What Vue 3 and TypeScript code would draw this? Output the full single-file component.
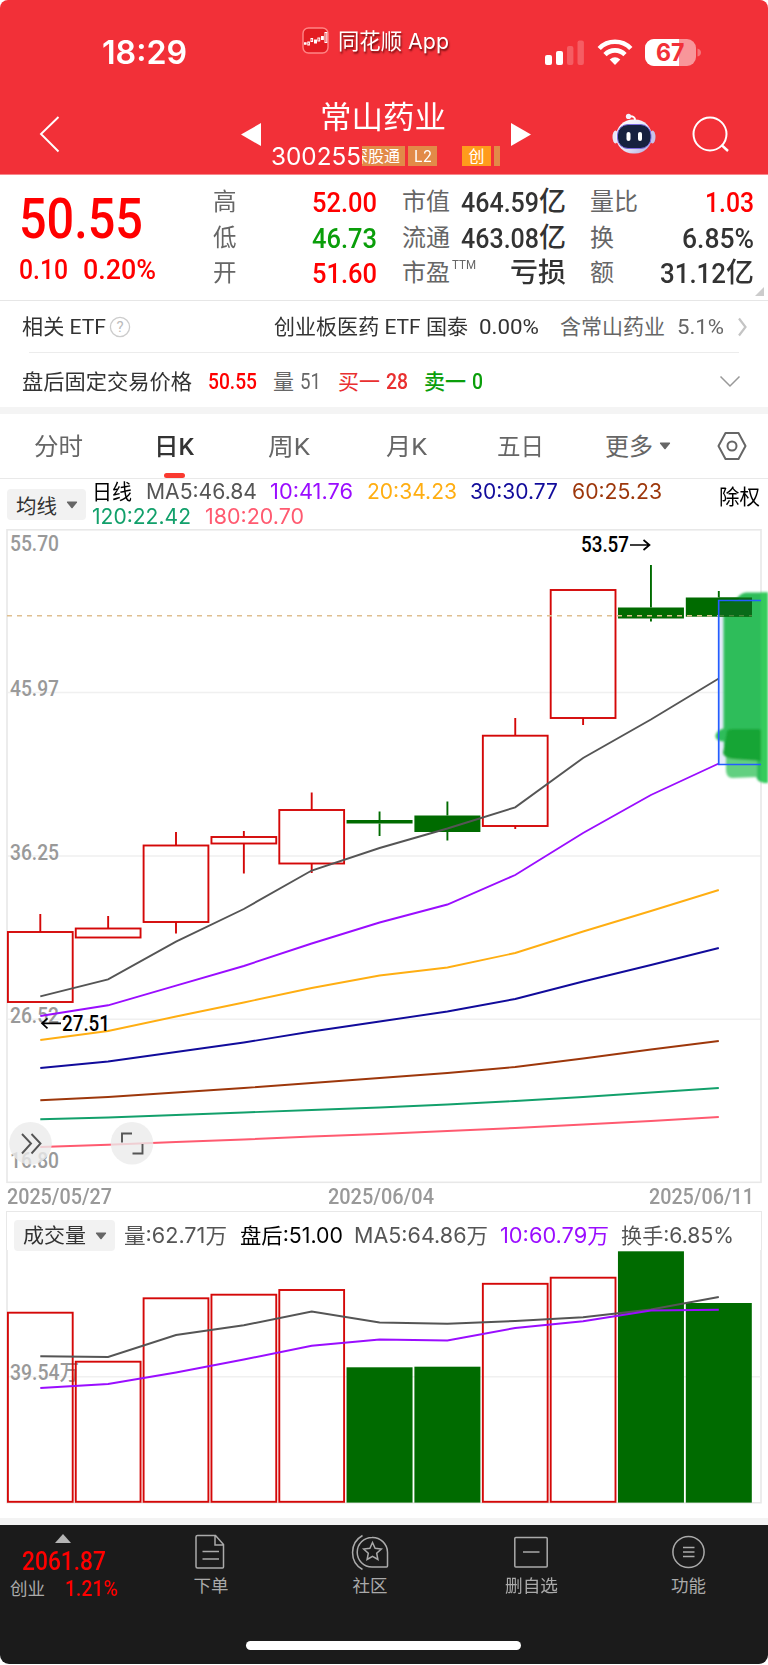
<script setup lang="ts">
import type { Directive } from 'vue'

// Scales a label horizontally so that it occupies the given width in the flow.
const vFit: Directive<HTMLElement, number> = {
  mounted(el, binding) {
    const natural = el.getBoundingClientRect().width
    el.style.transform = `scaleX(${binding.value / natural})`
    el.style.marginRight = `${binding.value - natural}px`
  },
}

interface Stat { text: string; w: number; tone?: string; sup?: string; cjk?: string; cjkW?: number }

const prices: { label: string; value: string; tone: string }[] = [
  { label: '高', value: '52.00', tone: 'up' },
  { label: '低', value: '46.73', tone: 'down' },
  { label: '开', value: '51.60', tone: 'up' },
]
const caps: { label: string; stat: Stat }[] = [
  { label: '市值', stat: { text: '464.59', w: 78, cjk: '亿', cjkW: 27 } },
  { label: '流通', stat: { text: '463.08', w: 78, cjk: '亿', cjkW: 27 } },
  { label: '市盈', stat: { text: '', w: 0, cjk: '亏损', cjkW: 56, sup: 'TTM' } },
]
const turns: { label: string; w: number; stat: Stat }[] = [
  { label: '量比', w: 48, stat: { text: '1.03', w: 49, tone: 'up' } },
  { label: '换', w: 24, stat: { text: '6.85%', w: 72 } },
  { label: '额', w: 24, stat: { text: '31.12', w: 66, cjk: '亿', cjkW: 28 } },
]

const tabs = [
  { text: '分时', w: 49 },
  { text: '日K', w: 40, active: true },
  { text: '周K', w: 42 },
  { text: '月K', w: 41 },
  { text: '五日', w: 47 },
]

const averages = [
  { text: '日线', w: 40, color: '#000' },
  { text: 'MA5:46.84', w: 111, color: '#555' },
  { text: '10:41.76', w: 83, color: '#9a0dff' },
  { text: '20:34.23', w: 90, color: '#ffae12' },
  { text: '30:30.77', w: 88, color: '#110b9b' },
  { text: '60:25.23', w: 90, color: '#9d370b' },
]
const longAverages = [
  { text: '120:22.42', w: 99, color: '#12a06b' },
  { text: '180:20.70', w: 99, color: '#ff5a70' },
]
const volumeLegend = [
  { text: '量:62.71万', w: 103, color: '#555' },
  { text: '盘后:51.00', w: 103, color: '#000' },
  { text: 'MA5:64.86万', w: 134, color: '#555' },
  { text: '10:60.79万', w: 109, color: '#9a0dff' },
  { text: '换手:6.85%', w: 113, color: '#555' },
]

// Horizontal geometry shared by both charts
const STEP = 67.85
const FIRST = 40.3
const cx = (i: number) => FIRST + i * STEP
const line = (ys: number[]) => ys.map((y, i) => `${cx(i).toFixed(1)},${y}`).join(' ')

// high, body top, body bottom, low, rising
const candles: { h: number; t: number; b: number; l: number; up: boolean }[] = [
  { h: 914, t: 932, b: 1002, l: 1002, up: true },
  { h: 916, t: 928.5, b: 937.5, l: 937.5, up: true },
  { h: 832, t: 845.5, b: 922, l: 933.5, up: true },
  { h: 831, t: 837, b: 843.5, l: 873.5, up: true },
  { h: 792.5, t: 810, b: 863.5, l: 873, up: true },
  { h: 811.5, t: 820, b: 823.5, l: 836, up: false },
  { h: 801.5, t: 815.5, b: 832, l: 840.5, up: false },
  { h: 718, t: 735.7, b: 826, l: 829, up: true },
  { h: 590, t: 590, b: 718, l: 725, up: true },
  { h: 565, t: 607.5, b: 618.5, l: 621.5, up: false },
  { h: 591, t: 597.5, b: 616.7, l: 616.7, up: false },
]

const priceLines = [
  { color: '#555', ys: [996.3, 979.3, 941.7, 909, 870.5, 848, 828.5, 807.3, 758, 719.5, 678.5] },
  { color: '#9a0dff', ys: [1016, 1005.3, 985.7, 966, 943.5, 922.5, 904.5, 875, 833, 795, 763.5] },
  { color: '#ffae12', ys: [1040, 1031, 1016.5, 1002.5, 988, 975.5, 967.5, 953, 931.5, 911, 890] },
  { color: '#110b9b', ys: [1068, 1061.5, 1052, 1042.5, 1031.5, 1021.5, 1011.5, 999, 981.5, 965, 948] },
  { color: '#9d370b', ys: [1100.3, 1097, 1092.5, 1088, 1083, 1078, 1073, 1067, 1058.5, 1049.5, 1041] },
  { color: '#12a06b', ys: [1119.3, 1117.5, 1115, 1112.5, 1110, 1107.5, 1104.5, 1101, 1097, 1092.5, 1088] },
  { color: '#ff5a70', ys: [1147, 1144.7, 1142, 1139.5, 1136.5, 1134, 1131, 1128, 1124.5, 1121, 1117] },
]

const volumes = [
  { t: 1312.7, up: true }, { t: 1361.7, up: true }, { t: 1298.3, up: true }, { t: 1294.7, up: true },
  { t: 1290, up: true }, { t: 1367.3, up: false }, { t: 1366.7, up: false }, { t: 1283.8, up: true },
  { t: 1277.7, up: true }, { t: 1251.3, up: false }, { t: 1303, up: false },
]
const volumeLines = [
  { color: '#555', ys: [1356.3, 1357, 1335, 1325.3, 1311.5, 1322.5, 1323.7, 1321, 1317.3, 1309.5, 1297] },
  { color: '#9a0dff', ys: [1388, 1384, 1372.5, 1359.5, 1345.7, 1339.5, 1340.5, 1328, 1321.3, 1310.5, 1309.7] },
]
const axis = [
  { v: '55.70', y: 550.5 }, { v: '45.97', y: 696 }, { v: '36.25', y: 859.5 },
  { v: '26.52', y: 1022.5 }, { v: '16.80', y: 1168 },
]
</script>

<template>
  <main class="screen">
    <header class="top">
      <div class="status">
        <span class="clock"><b v-fit="85">18:29</b></span>
        <span class="app-tag">
          <svg width="28" height="28" viewBox="0 0 28 28">
            <rect x="1" y="1" width="25" height="25" rx="5.5" fill="#e31c22" stroke="#ff8585" stroke-width="1.4" />
            <g stroke="#fff" stroke-width="1" fill="none">
              <rect x="2.5" y="15.8" width="1.6" height="1.4" fill="#fff" />
              <rect x="5.8" y="15" width="1.6" height="3" /><rect x="9" y="11.5" width="1.6" height="3" />
              <rect x="12.5" y="13" width="2" height="3" fill="#fff" /><rect x="15.9" y="11" width="1.8" height="3" />
              <rect x="19.5" y="9.5" width="1.8" height="3" fill="#fff" /><rect x="23" y="5.5" width="1.8" height="10" />
            </g>
          </svg>
          <b v-fit="111">同花顺 App</b>
        </span>
        <span class="device">
          <svg width="162" height="30" viewBox="0 0 162 30">
            <g fill="#fff">
              <rect x="1" y="18" width="7" height="10" rx="2" />
              <rect x="12" y="14" width="7" height="14" rx="2" />
              <rect x="23" y="9" width="6.4" height="19" rx="2" opacity=".22" />
              <rect x="33.5" y="3.5" width="6.4" height="24.5" rx="2" opacity=".22" />
            </g>
            <g fill="none" stroke="#fff" stroke-width="4.6">
              <path d="M55.2 11.5a22 22 0 0 1 31.6 0" />
              <path d="M61 17.6a14 14 0 0 1 20 0" />
            </g>
            <path d="M65.7 22.4q5.3-4.5 10.6 0L71 28z" fill="#fff" />
            <rect x="101" y="2" width="51" height="27" rx="9" fill="#f8969a" />
            <path d="M110 2h25v27h-25a9 9 0 0 1-9-9v-9a9 9 0 0 1 9-9z" fill="#fff" />
            <path d="M153.5 11.5q3.5 1 3.5 4t-3.5 4z" fill="#f57479" />
            <text x="112" y="24.4" textLength="28.5" lengthAdjust="spacingAndGlyphs" class="battery">67</text>
          </svg>
        </span>
      </div>
      <div class="nav">
        <svg class="back" width="24" height="40" viewBox="0 0 24 40"><path d="M20.5 3 3 20l17.500 17.500" fill="none" stroke="#fff" stroke-width="1.9" /></svg>
        <svg class="prev" width="20" height="23" viewBox="0 0 20 23"><path d="M20 0v23L0 11.500z" fill="#fff" /></svg>
        <div class="title">
          <div class="name"><span v-fit="126">常山药业</span></div>
          <div class="code">
            <span v-fit="90">300255</span>
            <div class="tags">
              <i class="tag t1"><span>深股通</span></i>
              <i class="tag t2"><span v-fit="18">L2</span></i>
              <i class="tag t3">创</i>
              <i class="tag t4"></i>
            </div>
          </div>
        </div>
        <svg class="next" width="20" height="23" viewBox="0 0 20 23"><path d="M0 0v23l20-11.500z" fill="#fff" /></svg>
        <svg class="bot" width="44" height="41" viewBox="0 0 44 41">
          <defs>
            <linearGradient id="shell" x1="0" y1="0" x2="1" y2="1">
              <stop offset="0" stop-color="#fff" /><stop offset=".6" stop-color="#e3e2f6" /><stop offset="1" stop-color="#aaa4dc" />
            </linearGradient>
          </defs>
          <path d="M16.500 3.500q7-1 6.500 4" fill="none" stroke="#fff" stroke-width="2" />
          <circle cx="16.500" cy="3.400" r="2.600" fill="#f4f2ff" />
          <ellipse cx="3.500" cy="24" rx="3" ry="6.500" fill="#e8e5f7" /><ellipse cx="40.500" cy="24" rx="3" ry="6.500" fill="#c8c2ea" />
          <rect x="4" y="6.500" width="36" height="34" rx="17" fill="url(#shell)" />
          <rect x="5.500" y="11.500" width="33.500" height="24" rx="10.500" fill="#17213f" stroke="#7d6be0" stroke-width="1" />
          <rect x="14.500" y="19" width="4" height="9" rx="2" fill="#fff" /><rect x="26" y="19" width="4" height="9" rx="2" fill="#fff" />
        </svg>
        <svg class="search" width="38" height="38" viewBox="0 0 38 38" fill="none" stroke="#fff" stroke-width="2"><circle cx="18" cy="18" r="16.500" /><path d="m29.500 29 6.500 6" stroke-width="2.400" /></svg>
      </div>
    </header>

    <section class="quote">
      <div class="last">
        <div class="big"><span v-fit="124">50.55</span></div>
        <div class="chg"><span v-fit="49">0.10</span><span v-fit="73">0.20%</span></div>
      </div>
      <dl class="col c1">
        <div v-for="p in prices" :key="p.label">
          <dt><span v-fit="23.5">{{ p.label }}</span></dt>
          <dd :class="p.tone"><span v-fit="65">{{ p.value }}</span></dd>
        </div>
      </dl>
      <dl class="col c2">
        <div v-for="c in caps" :key="c.label">
          <dt><span v-fit="48">{{ c.label }}</span><sup v-if="c.stat.sup"><span v-fit="24">{{ c.stat.sup }}</span></sup></dt>
          <dd><span v-if="c.stat.text" v-fit="c.stat.w">{{ c.stat.text }}</span><em v-fit="c.stat.cjkW || 0">{{ c.stat.cjk }}</em></dd>
        </div>
      </dl>
      <dl class="col c3">
        <div v-for="t in turns" :key="t.label">
          <dt><span v-fit="t.w">{{ t.label }}</span></dt>
          <dd :class="t.stat.tone"><span v-fit="t.stat.w">{{ t.stat.text }}</span><em v-if="t.stat.cjk" v-fit="t.stat.cjkW || 0">{{ t.stat.cjk }}</em></dd>
        </div>
      </dl>
      <i class="corner"></i>
    </section>

    <section class="etf">
      <span v-fit="84">相关 ETF</span>
      <svg width="22" height="22" viewBox="0 0 22 22"><circle cx="11" cy="11" r="9.600" fill="none" stroke="#ccc" stroke-width="1.300" /><text x="11" y="16.300" text-anchor="middle" class="q">?</text></svg>
      <span v-fit="194">创业板医药 ETF 国泰</span>
      <span v-fit="60">0.00%</span>
      <span v-fit="105" class="dim">含常山药业</span>
      <span v-fit="47" class="dim">5.1%</span>
      <svg width="12" height="22" viewBox="0 0 12 22"><path d="m2 2.500 6.500 8.500L2 19.500" fill="none" stroke="#c4c4c4" stroke-width="2.200" /></svg>
    </section>

    <section class="after">
      <span v-fit="170">盘后固定交易价格</span>
      <b v-fit="49" class="up">50.55</b>
      <span v-fit="21" class="dim">量</span>
      <b v-fit="21" class="dim light">51</b>
      <span v-fit="42" class="buy">买一</span>
      <b v-fit="22" class="buy">28</b>
      <span v-fit="42" class="down strong">卖一</span>
      <b v-fit="11" class="down">0</b>
      <svg width="22" height="14" viewBox="0 0 22 14"><path d="m1.500 1.500 9.500 9.500 9.500-9.500" fill="none" stroke="#999" stroke-width="1.500" /></svg>
    </section>

    <nav class="tabs">
      <div v-for="t in tabs" :key="t.text" :class="{ active: t.active }"><span v-fit="t.w">{{ t.text }}</span></div>
      <div><span v-fit="48">更多</span></div>
      <svg class="caret" width="12" height="8" viewBox="0 0 12 8"><path d="M1.500.500h9a.700.700 0 0 1 .500 1L6.600 7a.800.800 0 0 1-1.200 0L1 1.500a.700.700 0 0 1 .500-1z" fill="#666" /></svg>
      <svg width="32" height="30" viewBox="0 0 32 30" fill="none" stroke="#666" stroke-width="2"><path d="M9.500 2h13l7 13-7 13h-13l-7-13z" stroke-linejoin="round" /><circle cx="16" cy="15" r="4.500" /></svg>
    </nav>

    <section class="legend">
      <div class="picker"><span v-fit="41">均线</span><svg width="12" height="8" viewBox="0 0 12 8"><path d="M1.500.500h9a.700.700 0 0 1 .500 1L6.600 7a.800.800 0 0 1-1.200 0L1 1.500a.700.700 0 0 1 .500-1z" fill="#666" /></svg></div>
      <div class="avgs">
        <div><span v-for="a in averages" :key="a.text" v-fit="a.w" :style="{ color: a.color }">{{ a.text }}</span></div>
        <div><span v-for="a in longAverages" :key="a.text" v-fit="a.w" :style="{ color: a.color }">{{ a.text }}</span></div>
      </div>
      <div class="rights"><span v-fit="41">除权</span></div>
    </section>

    <svg class="kline" width="768" height="656" viewBox="0 528 768 656">
      <defs>
        <filter id="soft" x="-20%" y="-20%" width="140%" height="140%"><feGaussianBlur stdDeviation="1.200" /></filter>
      </defs>
      <g fill="none" stroke="#e8e8e8">
        <path d="M8 692.500H761M8 856H761M8 1019.300H761" stroke="#f0f0f0" stroke-width="1.500" />
        <rect x="7" y="529.800" width="754" height="652.500" stroke-width="1.600" />
      </g>
      <g class="axis"><text v-for="a in axis" :key="a.v" x="10" :y="a.y" textLength="49" lengthAdjust="spacingAndGlyphs">{{ a.v }}</text></g>
      <g v-for="(c, i) in candles" :key="i" :stroke="c.up ? '#d40808' : '#006b00'" stroke-width="1.9">
        <path v-if="c.h < c.t" :d="`M${cx(i)} ${c.h}V${c.t}`" />
        <path v-if="c.l > c.b" :d="`M${cx(i)} ${c.b}V${c.l}`" />
        <rect v-if="c.up" :x="cx(i) - 32.4" :y="c.t" width="64.8" :height="c.b - c.t" fill="none" />
        <rect v-else :x="cx(i) - 33" :y="c.t" width="66" :height="c.b - c.t" fill="#006b00" stroke="none" />
      </g>
      <path d="M7 615.700H761" stroke="#dfbf90" stroke-width="1.500" stroke-dasharray="5 5" />
      <polyline v-for="l in priceLines" :key="l.color" :points="line(l.ys)" fill="none" :stroke="l.color" stroke-width="1.9" />
      <rect x="718.700" y="600.500" width="42.500" height="164" fill="#dfe4fa" fill-opacity=".75" />
      <g filter="url(#soft)">
        <path d="M738 597q3-4 8-4.500h22v190h-3q-9 0-9-8l-25 2q-5-2-4-8l2-10q-6-3-5-8l0-9q-9 0-8.500-6 1-5 8-7V616q-1-3 5-5 6-12 9.500-14z" fill="#2ebd5a" />
        <path d="M726 756l31 3v18l-25 1q-6-1-6-8z" fill="#62d080" />
        <path d="M727 731q1-2 6-2h26q2 0 2 3v29l-28-2q-9-1-10-6z" fill="#18a534" />
        <path d="M761 592.500h7v190.500h-3q-4 0-4-3z" fill="#35cb5b" />
      </g>
      <path d="M719 597.500h33v19.200h-33z" fill="#006b00" /><path d="M740 598h12v18.500h-32v-14q14 1 20-4.500z" fill="#086a18" />
      <path d="M719 615.700h33" stroke="#dfbf90" stroke-width="1.100" stroke-dasharray="5 5" opacity=".4" />
      <path d="M761 600.500h-42.300v164H761" fill="none" stroke="#245dff" stroke-width="1.700" />
      <g class="mark">
        <text x="581" y="552" textLength="48" lengthAdjust="spacingAndGlyphs">53.57</text>
        <text x="62" y="1030.700" textLength="48" lengthAdjust="spacingAndGlyphs">27.51</text>
        <path d="M630 545h19.500M643.500 540l6 5-6 5M61 1023.300H42M47.500 1018.300l-5.500 5 5.500 5" fill="none" stroke="#000" stroke-width="1.700" />
      </g>
      <g fill="#ebebeb" fill-opacity=".8"><circle cx="30.500" cy="1143.300" r="21.300" /><circle cx="132" cy="1143.300" r="21.300" /></g>
      <path d="m22 1134 9 9.500-9 10M31.500 1134l9 9.500-9 10M122 1142.500v-9h10M132.500 1153.500h10v-9.500" fill="none" stroke="#555" stroke-width="1.900" />
    </svg>

    <div class="dates"><span v-fit="105">2025/05/27</span><span v-fit="106">2025/06/04</span><span v-fit="105">2025/06/11</span></div>

    <section class="volume">
      <div class="vhead">
        <div class="picker"><span v-fit="63">成交量</span><svg width="12" height="8" viewBox="0 0 12 8"><path d="M1.500.500h9a.700.700 0 0 1 .500 1L6.600 7a.800.800 0 0 1-1.200 0L1 1.500a.700.700 0 0 1 .500-1z" fill="#666" /></svg></div>
        <span v-for="v in volumeLegend" :key="v.text" v-fit="v.w" :style="{ color: v.color }">{{ v.text }}</span>
      </div>
      <svg width="768" height="254" viewBox="0 1250 768 254">
        <path d="M7 1250V1502.700H761V1250" fill="none" stroke="#e8e8e8" stroke-width="1.600" />
        <path d="M8 1376.700H761" stroke="#f0f0f0" stroke-width="1.500" />
        <g class="axis"><text x="10" y="1379.500" textLength="69" lengthAdjust="spacingAndGlyphs">39.54万</text></g>
        <template v-for="(v, i) in volumes" :key="i">
          <rect v-if="v.up" :x="cx(i) - 32.4" :y="v.t" width="64.8" :height="1501.8 - v.t" fill="none" stroke="#d40808" stroke-width="1.9" />
          <rect v-else :x="cx(i) - 33" :y="v.t" width="66" :height="1502.6 - v.t" fill="#006b00" />
        </template>
        <polyline v-for="l in volumeLines" :key="l.color" :points="line(l.ys)" fill="none" :stroke="l.color" stroke-width="1.9" />
      </svg>
    </section>

    <footer class="bar">
      <div class="items">
        <div class="index">
          <svg width="16" height="9" viewBox="0 0 16 9"><path d="M8 0l8 9H0z" fill="#b4b4b4" /></svg>
          <b v-fit="84">2061.87</b>
          <div><span v-fit="35">创业</span><b v-fit="53">1.21%</b></div>
        </div>
        <div class="item">
          <svg width="36" height="36" viewBox="0 0 36 36"><path d="M4.500 1.500h18l8 9V33q0 1-1 1h-25q-1.500 0-1.500-1.500V3q0-1.500 1.500-1.500zM22 2v9h8.500M9.500 17.500H26M9.500 25H26" /></svg>
          <span v-fit="35">下单</span>
        </div>
        <div class="item">
          <svg width="38" height="36" viewBox="0 0 38 36"><path d="M21 3.500a14.800 14.800 0 0 0 0 29.600h14.500q1 0 1-1V18.300A15 15 0 0 0 21 3.500zM11.500 1.500a19.500 19.500 0 0 0 0 34" /><path d="m21.500 8.500 2.600 5.800 6.200.700-4.600 4.200 1.200 6.300-5.400-3.200-5.400 3.200 1.200-6.300-4.600-4.200 6.200-.700z" /></svg>
          <span v-fit="35">社区</span>
        </div>
        <div class="item">
          <svg width="36" height="36" viewBox="0 0 36 36"><rect x="1.800" y="3.500" width="32.400" height="29.500" rx="1" /><path d="M10 18h16.500" /></svg>
          <span v-fit="53">删自选</span>
        </div>
        <div class="item">
          <svg width="36" height="36" viewBox="0 0 36 36"><circle cx="17.500" cy="18" r="15.600" /><path d="M12 13.500h11.500M12 18h11.500M12 22.500h11.500" /></svg>
          <span v-fit="35">功能</span>
        </div>
      </div>
      <div class="home"></div>
    </footer>
  </main>
</template>

<style>
body { background: #fff; }
</style>

<style scoped>
* { box-sizing: border-box; }
.screen {
  width: 768px;
  height: 1665px;
  overflow: hidden;
  display: flex;
  flex-direction: column;
  background: #fff;
  font-family: Inter, "Noto Sans CJK SC", sans-serif;
  color: #333;
}
span, b, em { display: inline-block; flex: none; white-space: nowrap; transform-origin: left center; font-style: normal; }
svg { display: block; flex: none; }
.up { color: #f00; }
.down { color: #0a9e0a; }
.dim { color: #666; }
.buy { color: #e93030; }

.top { height: 175px; flex: none; background: #f23038; border-radius: 8px 8px 0 0; color: #fff; border-bottom: 1px solid #f8868b; }
.status { height: 100px; display: grid; grid-template-columns: 302px 242px 1fr; align-items: start; }
.clock { padding: 33px 0 0 102px; font-size: 32px; line-height: 40px; font-weight: 600; }
.clock b { font-weight: 600; }
.app-tag { display: flex; align-items: center; gap: 8px; padding-top: 27px; }
.app-tag b { font-weight: 400; font-size: 22px; line-height: 28px; text-shadow: 1px 2px 2px rgba(70, 0, 0, .75); }
.device { padding-top: 37px; }
.battery { font: 700 24px Inter, sans-serif; fill: #f23038; }
.nav { display: grid; height: 73px; grid-template-columns: 38px 203px 30px 240px 101px 81px 1fr; align-items: start; }
.back { grid-column: 2; grid-row: 1; margin-top: 14px; }
.prev { margin-top: 23px; grid-column: 2; grid-row: 1; justify-self: end; margin-right: -20px; }
.title { grid-column: 4; grid-row: 1; }
.name { height: 44px; padding-left: 49px; font-size: 31px; line-height: 34px; font-weight: 400; }
.code { display: flex; align-items: center; height: 22px; font-size: 24.500px; line-height: 22px; gap: 1px; margin-top: 1px; }
.tags { display: flex; }
.tag { height: 20px; font-style: normal; background: #e28a48; font-size: 16px; line-height: 20px; overflow: hidden; display: flex; justify-content: flex-end; }
.t1 { width: 43px; margin-right: 3px; padding-right: 5px; }
.t2 { width: 29px; margin-right: 25px; padding-right: 5px; }
.t3 { width: 29px; margin-right: 3px; background: #ff9b1c; justify-content: center; }
.t4 { width: 6px; }
.next { grid-column: 5; grid-row: 1; margin-top: 23px; }
.bot { grid-column: 6; grid-row: 1; margin-top: 13px; }
.search { grid-column: 7; grid-row: 1; margin: 16px 0 0 -1px; }

.quote { position: relative; height: 126px; flex: none; display: grid; grid-template-columns: 213px 164px 25px 164px 24px 164px; border-bottom: 1.500px solid #e6e6e6; font-family: Roboto, "Noto Sans CJK SC", sans-serif; }
.last { color: #f00; padding-left: 19px; font-weight: 500; }
.big { font-size: 55px; line-height: 60px; padding-top: 14px; }
.chg { display: flex; gap: 15px; font-size: 28px; line-height: 36px; margin-top: 3px; }
.col { margin: 0; padding-top: 10px; }
.col > div { height: 35.500px; display: flex; justify-content: space-between; align-items: center; line-height: 35.500px; }
.c2 { grid-column: 4; }
.c3 { grid-column: 6; }
dt { font-size: 24px; color: #666; font-weight: 400; display: flex; }
dd { margin: 0; font-size: 28px; font-weight: 500; display: flex; }
dd em { font-size: 27px; }
sup { font-size: 12px; line-height: 12px; margin: 3px 0 0 2px; vertical-align: top; }
.corner { position: absolute; right: 4px; bottom: 4px; border: solid transparent; border-width: 0 0 9px 9px; border-bottom-color: #ccc; }

.etf, .after { height: 52px; flex: none; display: grid; justify-items: start; align-items: center; font-size: 21px; line-height: 30px; position: relative; font-family: Roboto, "Noto Sans CJK SC", sans-serif; }
.etf { grid-template-columns: 87px 165px 205px 81px 117px 60px 1fr; padding-left: 22px; }
.etf::after { content: ""; position: absolute; left: 29px; right: 29px; bottom: 0; height: 1.500px; background: #ececec; }
.q { font: 15px Roboto, sans-serif; fill: #bbb; }
.after { height: 54px; padding: 4px 0 0 22px; grid-template-columns: 186px 65px 27px 38px 48px 38px 48px 247px 1fr; }
.after b { font-weight: 500; font-size: 21.500px; }
.after .light { font-weight: 400; }
.strong { font-weight: 500; }

.tabs { flex: none; height: 72px; border-top: 7px solid #f4f4f4; border-bottom: 1px solid #e9e9e9; display: grid; grid-template-columns: 120px 114px 118px 111px 108px 54px 57px 1fr; padding-left: 34px; align-items: center; font-size: 24px; color: #666; font-weight: 400; font-family: Roboto, "Noto Sans CJK SC", sans-serif; }
.tabs > div { height: 64px; line-height: 67px; position: relative; }
.tabs .active { color: #333; font-weight: 500; }
.tabs .active::after { content: ""; position: absolute; left: 10px; bottom: 0; width: 21px; height: 5px; border-radius: 2.500px; background: #fa3a30; }
.tabs > svg { margin-top: 0; }

.legend { flex: none; height: 49px; display: grid; grid-template-columns: 85px 627px 1fr; padding-left: 7px; font-size: 21px; }
.picker { display: flex; align-items: center; justify-content: space-between; background: #f2f2f2; border-radius: 4px; width: 79px; height: 31px; margin-top: 10px; padding: 0 8px 0 9px; font-size: 20.500px; }
.avgs > div { display: flex; gap: 13.600px; height: 25px; line-height: 26px; }
.rights { line-height: 35px; color: #000; }
.axis { font: 500 21.500px Roboto, "Noto Sans CJK SC", sans-serif; fill: #999; }
.mark { font: 500 21.500px Roboto, sans-serif; }
.dates { flex: none; height: 27px; display: flex; justify-content: space-between; padding: 0 14px 0 7px; font: 500 21.500px/26px Roboto, sans-serif; color: #999; }
.volume { flex: none; }
.vhead { height: 39px; margin: 0 6px; border: solid #e8e8e8; border-width: 1.600px 1.600px 0; display: grid; grid-template-columns: 110px 116px 114px 146px 121px 1fr; padding-left: 7px; align-items: center; justify-items: start; font-size: 21px; line-height: 30px; padding-top: 8px; }
.vhead .picker { width: 101px; margin: 0; }

.bar { flex: none; margin-top: 14px; border-top: 7px solid #f3f3f3; height: 146px; background: #1b1b1b; background-clip: padding-box; border-radius: 0 0 9px 9px; color: #aaa; }
.items { height: 116px; display: grid; grid-template-columns: 135px 152px 166px 156px 1fr; }
.index { padding: 9px 0 0 10px; color: #f00; font-family: Roboto, "Noto Sans CJK SC", sans-serif; }
.index > svg { margin-left: 44.500px; }
.index > b { margin-left: 12px; font-size: 25px; line-height: 36px; font-weight: 500; margin-top: 1px; }
.index > div { display: flex; gap: 20px; align-items: center; line-height: 26px; margin-top: -4px; }
.index > div span { color: #aaa; font-size: 17.500px; }
.index > div b { font-size: 22px; font-weight: 500; }
.item { display: flex; flex-direction: column; align-items: center; padding-top: 9px; font-size: 17.500px; line-height: 32px; }
.item svg { fill: none; stroke: #aaa; stroke-width: 1.500; }
.home { width: 275px; height: 9px; border-radius: 5px; background: #fff; margin: 0 0 0 246px; }
</style>
